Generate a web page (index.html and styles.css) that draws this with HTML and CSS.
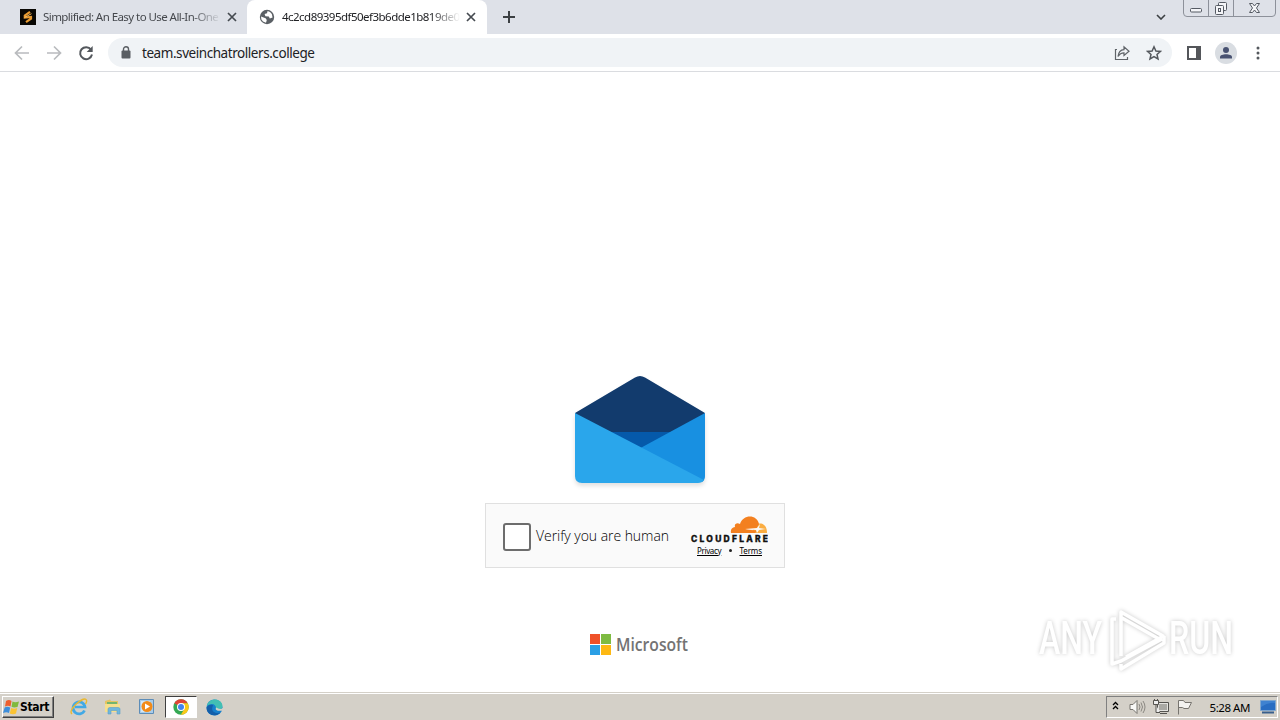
FILE: index.html
```html
<!DOCTYPE html>
<html lang="en">
<head>
  <meta charset="UTF-8">
  <title>team.sveinchatrollers.college</title>
  <link rel="stylesheet" href="styles.css">
</head>
<body>
  <div class="tabs">
    <div class="tab">
      <svg class="favicon" width="16" height="16" viewBox="0 0 16 16">
        <rect width="16" height="16" fill="#090804"/>
        <path d="M10 2.800L4.800 6.600V8.600L11 8V9.600L6 13.200" fill="none" stroke="#e99b32" stroke-width="2.200"/>
        <path d="M4.500 8.500L11.500 4.700" fill="none" stroke="#f5bd61" stroke-width="1"/>
      </svg>
      <span class="tab-title tab-title-first">Simplified: An Easy to Use All-In-One</span>
      <svg class="close" width="10" height="10" viewBox="0 0 10 10"><path d="M1 1L9 9M9 1L1 9" stroke="#454a50" stroke-width="1.700"/></svg>
    </div>
    <div class="tab active">
      <svg class="favicon" width="16" height="16" viewBox="0 0 16 16">
        <circle cx="8" cy="8" r="7.200" fill="#5b6065"/>
        <path d="M8.600 2L8 4.200L5.600 5L6.400 7.200L9.800 7.400L10.800 9.600L13.600 8.400L12.800 5L11 3ZM2 7.600L6.600 9.200L7.800 11L7 13.800L4 12.600L2.400 10.400Z" fill="#fff"/>
      </svg>
      <span class="tab-title tab-title-second">4c2cd89395df50ef3b6dde1b819de0</span>
      <svg class="close" width="10" height="10" viewBox="0 0 10 10"><path d="M1 1L9 9M9 1L1 9" stroke="#454a50" stroke-width="1.700"/></svg>
    </div>
    <svg class="new-tab" width="12" height="12" viewBox="0 0 12 12"><path d="M6 0V12M0 6H12" stroke="#3c4043" stroke-width="2"/></svg>
    <svg class="tab-search" width="10" height="6" viewBox="0 0 10 6"><path d="M1 1L5 5L9 1" fill="none" stroke="#3c4043" stroke-width="1.600"/></svg>
    <svg class="window-buttons" width="94" height="18" viewBox="0 0 94 18">
      <path d="M.5 0V13Q.5 16.500 4 16.500H89Q92.500 16.500 92.500 13V0M25.500 0V16M50.500 0V16" fill="none" stroke="#8d919a"/>
      <g fill="#f4f5f8" stroke="#555a63">
        <rect x="7.500" y="8.500" width="11" height="3.500" rx="1"/>
        <rect x="35.500" y="2.500" width="8" height="8" rx="1"/>
        <rect x="32.500" y="5.500" width="8" height="9" rx="1"/>
        <rect x="35.500" y="8.500" width="2" height="3"/>
        <path d="M66.500 3.500H69.500L71.500 6L73.500 3.500H76.500L73.500 8L76.500 12.500H73.500L71.500 10L69.500 12.500H66.500L69.500 8Z"/>
      </g>
    </svg>
  </div>

  <div class="toolbar">
    <svg class="nav-icon" width="16" height="16" viewBox="0 0 16 16"><path d="M15 8H2M8 1.500L1.500 8L8 14.500" fill="none" stroke="#b9bbbe" stroke-width="1.700"/></svg>
    <svg class="nav-icon" width="16" height="16" viewBox="0 0 16 16"><path d="M1 8H14M8 1.500L14.500 8L8 14.500" fill="none" stroke="#b9bbbe" stroke-width="1.700"/></svg>
    <svg class="nav-icon" width="16" height="16" viewBox="0 0 16 16"><path d="M13 4.600A6 6 0 1 0 14 9.500" fill="none" stroke="#54585d" stroke-width="2"/><path d="M14.700 1V7H8.700Z" fill="#54585d"/></svg>
    <div class="address">
      <svg width="10" height="13" viewBox="0 0 10 13"><rect x=".5" y="4.500" width="9" height="8" rx="1" fill="#5a5e63"/><path d="M2.500 5V3A2.500 2.200 0 0 1 7.500 3V5" fill="none" stroke="#5a5e63" stroke-width="1.400"/></svg>
      <span class="url">team.sveinchatrollers.college</span>
      <svg class="share" width="16" height="16" viewBox="0 0 16 16"><path d="M3 4.500H1.500V14.500H13.500V12M4 11.500C4.500 7 6.500 4.800 10 4.600V1.800L15 6.200L10 10.500V7.800C7.500 7.800 5.500 9 4 11.500Z" fill="none" stroke="#5f6368" stroke-width="1.200"/></svg>
      <svg class="star" width="16" height="16" viewBox="0 0 16 16"><path d="M8 1.800L9.900 6L14.400 6.400L11 9.400L12 13.900L8 11.500L4 13.900L5 9.400L1.600 6.400L6.100 6Z" fill="none" stroke="#54585d" stroke-width="1.500"/></svg>
    </div>
    <svg class="panel" width="14" height="14" viewBox="0 0 14 14"><path d="M1 1H13V13H1Z" fill="#fff" stroke="#54565a" stroke-width="2"/><path d="M9 0H14V14H9Z" fill="#54565a"/></svg>
    <svg class="profile" width="22" height="22" viewBox="0 0 22 22"><circle cx="11" cy="11" r="11" fill="#d9dde2"/><circle cx="11" cy="8" r="3" fill="#485271"/><path d="M5 16.500V15C5 11.300 17 11.300 17 15V16.500Z" fill="#485271"/></svg>
    <svg class="menu" width="4" height="14" viewBox="0 0 4 14" fill="#54585d"><circle cx="2" cy="2" r="1.500"/><circle cx="2" cy="7" r="1.500"/><circle cx="2" cy="12" r="1.500"/></svg>
  </div>

  <main class="page">
    <svg class="envelope" width="130" height="107" viewBox="0 0 130 107">
      <path d="M0 37L60 1.500Q65 -1.500 70 1.500L130 37L124 65H8Z" fill="#123b6d"/>
      <path d="M30 56H100L66 76Z" fill="#0559aa"/>
      <path d="M130 37V100Q130 104 127 106L60 75Z" fill="#1890e1"/>
      <path d="M0 37L129 104Q127 107 123 107H7Q0 107 0 100Z" fill="#2aa6eb"/>
    </svg>
    <div class="challenge">
      <span class="checkbox"></span>
      <span class="verify">Verify you are human</span>
      <div class="brand">
        <svg width="78" height="28" viewBox="0 0 78 28">
          <path d="M62 18C63 13 65 9 70 8.500C74 8.500 77 12 77 18Z" fill="#fbad41"/>
          <path d="M41 18Q40 13 45 12C44 9 47 7 50 9C53 -1 67 -1 69 9L66 14L55 14.500L67 15.500L65 18Z" fill="#f38020"/>
          <path d="M55 14L67 13L70 9L69 13L76 14L69 15L67 18L66 15Z" fill="#fafafa"/>
          <text class="cloudflare" x="1" y="27" textLength="77">CLOUDFLARE</text>
        </svg>
        <div class="links"><span class="link privacy">Privacy</span><span class="dot"></span><span class="link terms">Terms</span></div>
      </div>
    </div>
    <div class="microsoft">
      <svg width="21" height="21" viewBox="0 0 21 21"><path d="M0 0H10V10H0Z" fill="#ef5129"/><path d="M11 0H21V10H11Z" fill="#7ebb42"/><path d="M0 11H10V21H0Z" fill="#2b9fe5"/><path d="M11 11H21V21H11Z" fill="#fdb813"/></svg>
      <svg class="wordmark" width="73" height="21" viewBox="0 0 73 21"><text class="ms-name" x="0" y="17" textLength="72" lengthAdjust="spacingAndGlyphs">Microsoft</text></svg>
    </div>
    <svg class="watermark" width="206" height="70" viewBox="0 0 206 70">
      <text class="watermark-text" x="7" y="49" textLength="63" lengthAdjust="spacingAndGlyphs">ANY</text>
      <text class="watermark-text" x="137" y="49" textLength="64" lengthAdjust="spacingAndGlyphs">RUN</text>
      <g fill="none" stroke="#fff" stroke-width="3.500" stroke-linejoin="round">
        <path d="M89 51V7L131 31L127 34L90 13M94 52L128 33"/>
        <path d="M84 14H80V59L89 56L130 34M89 59V64L132 38V31"/>
      </g>
    </svg>
  </main>

  <div class="taskbar">
    <div class="start">
      <svg width="17" height="17" viewBox="0 0 17 17">
        <path d="M3 2Q6 0 8.500 2L7.500 7.500Q5 6 2 7.500Z" fill="#ed5f2f"/>
        <path d="M9.500 2.500Q12 4 16 2.500L14.500 8Q11 9 8.500 7.800Z" fill="#80b93e"/>
        <path d="M1.700 8.500Q4 7 7.200 8.600L6 14Q3.500 12.500 0 14Z" fill="#3d8edb"/>
        <path d="M8.200 9Q11 10.500 14.200 9L13 14.500Q10 16 6.800 14.500Z" fill="#fac333"/>
      </svg>
      <span>Start</span>
    </div>
    <svg class="app ie" width="18" height="18" viewBox="0 0 18 18">
      <path d="M14.500 12.500A6 6 0 1 1 15 9H5" fill="none" stroke="#42a9e5" stroke-width="2.700"/>
      <path d="M2 16C-3 12 13 -1 16 1.500Q17.500 3 15.500 6" fill="none" stroke="#e9b831" stroke-width="1.400"/>
    </svg>
    <svg class="app" width="18" height="18" viewBox="0 0 18 18">
      <path d="M1 3L6 1.500L7 3H14V14H1Z" fill="#e5c463"/>
      <path d="M3 4H13V8H3Z" fill="#74b56e"/><path d="M1 6H16V14H1Z" fill="#f6df8d"/>
      <path d="M4 16V11Q4 9.500 6 9.500H14Q16 9.500 16 11V16H13V12.500H7V16Z" fill="#71b7dc" stroke="#5b9fc8" stroke-width=".6"/>
    </svg>
    <svg class="app" width="18" height="18" viewBox="0 0 18 18">
      <path d="M1.500 1.500H15.500V15.500H1.500Z" fill="#a8cce9" stroke="#5d8db8"/>
      <path d="M3 3H12V14H3Z" fill="#d3e7f6"/>
      <circle cx="9" cy="8.500" r="5.500" fill="#f28b19"/><path d="M7 5.500L12 8.500L7 11.500Z" fill="#fff"/>
    </svg>
    <div class="running">
      <svg width="16" height="16" viewBox="0 0 16 16">
        <circle cx="8" cy="8" r="7.700" fill="#34a853"/>
        <path d="M8 8L1.300 4.200A7.700 7.700 0 0 1 14.700 4.200H8Z" fill="#df4435"/>
        <path d="M8 4.200H14.700A7.700 7.700 0 0 1 7.800 15.700L11.300 9.900Z" fill="#fbc817"/>
        <circle cx="8" cy="8" r="4" fill="#fff"/><circle cx="8" cy="8" r="3" fill="#4284ee"/>
      </svg>
    </div>
    <svg class="app edge" width="17" height="17" viewBox="0 0 17 17">
      <circle cx="8.500" cy="8.500" r="8" fill="#1680cd"/>
      <path d="M.8 7C3 -2 16 -1 16.500 7C16.500 11 12 12 9.500 10.500C11 8.500 9 5 6 5Q3 5 .8 7Z" fill="#42bfb4"/>
      <path d="M6.500 8C5 12 9 15 14.500 13.500C8 20 -1 14 .8 8Q3 5 7 6Z" fill="#145fa9"/>
      <path d="M10 8.500Q9 11 12 11.700H17V9Q14 11 10 8.500Z" fill="#d4d0c8"/>
    </svg>
    <div class="tray">
      <svg class="chevron" width="7" height="9" viewBox="0 0 7 9"><path d="M1 4L3.500 1.500L6 4M1 8L3.500 5.500L6 8" fill="none" stroke="#000" stroke-width="1.300"/></svg>
      <svg class="sound" width="17" height="16" viewBox="0 0 17 16"><path d="M1 5.500H4L8 1.500V14.500L4 10.500H1Z" fill="#f8f8f6" stroke="#77746f"/><path d="M10 5Q12 8 10 11M12 3.500Q15 8 12 12.500M14 2Q18 8 14 14" fill="none" stroke="#8b8882"/></svg>
      <svg class="network" width="16" height="16" viewBox="0 0 16 16"><path d="M4.500 3.500H15.500V12.500H4.500ZM7 14.500H14" fill="#e4e3df" stroke="#55534f"/><path d="M6 5H14V11H6Z" fill="#aaa9a4"/><path d="M.5 1.500V5.500H5.500V1.500ZM3 6V13.500H7M1.500 0V2M4.500 0V2" fill="#eee" stroke="#55534f"/></svg>
      <svg class="flag" width="17" height="16" viewBox="0 0 17 16"><path d="M2.500 15.500V1.500H7.500L9 3.500H15.500L12.500 9.500H8L6.500 8.500H3" fill="#f3f2ef" stroke="#77746f"/></svg>
      <span class="clock">5:28 AM</span>
      <svg class="desktop" width="16" height="14" viewBox="0 0 16 14"><path d="M.5.5H15.500V10.500H.5Z" fill="#296dc2" stroke="#7fa6cf"/><path d="M1 7Q8 2 15 3V1H1Z" fill="#3f82d0"/><path d="M2 12.500H14" stroke="#385f8c" stroke-width="2"/></svg>
    </div>
  </div>
</body>
</html>
```
FILE: styles.css
```css
* {
  box-sizing: border-box;
}

body {
  margin: 0;
  width: 1280px;
  height: 720px;
  overflow: hidden;
  display: flex;
  flex-direction: column;
  background: #fff;
  color: #202124;
  font-family: "Noto Sans", sans-serif;
}

svg {
  display: block;
  flex: none;
}

span {
  white-space: nowrap;
}

/* browser */
.tabs {
  height: 34px;
  flex: none;
  display: flex;
  background: #dee1e8;
}

.tab {
  width: 247px;
  height: 34px;
  padding: 0 10px 0 20px;
  display: flex;
  align-items: center;
}

.tab.active {
  width: 240px;
  padding: 0 11px 0 12px;
  background: #fff;
  border-radius: 8px 8px 0 0;
}

.tab-title {
  width: 178px;
  margin-left: 7px;
  font-size: 11.5px;
  line-height: 20px;
  -webkit-mask-image: linear-gradient(to right, #000 148px, transparent 178px);
  mask-image: linear-gradient(to right, #000 148px, transparent 178px);
}

.tab-title-first {
  letter-spacing: -0.56px;
  color: #45484d;
}

.tab-title-second {
  letter-spacing: -0.52px;
}

.close {
  margin-left: auto;
}

.new-tab {
  margin: 11px 0 0 16px;
}

.tab-search {
  margin: 14px 17px 0 auto;
}

.window-buttons {
  margin-right: 3px;
}

.toolbar {
  height: 38px;
  flex: none;
  padding-left: 14px;
  display: flex;
  align-items: center;
  border-bottom: 1px solid #dadce0;
}

.nav-icon {
  margin-right: 16px;
}

.address {
  width: 1064px;
  height: 29px;
  margin-left: -2px;
  padding: 0 10px 0 13px;
  display: flex;
  align-items: center;
  border-radius: 15px;
  background: #f0f3f6;
}

.url {
  margin-left: 11px;
  font-size: 13.5px;
  letter-spacing: -0.44px;
}

.share {
  margin-left: auto;
}

.star {
  margin-left: 16px;
}

.panel {
  margin-left: 15px;
}

.profile {
  margin-left: 14px;
}

.menu {
  margin-left: 19px;
}

/* verification page */
.page {
  position: relative;
  height: 620px;
  flex: none;
  display: flex;
  flex-direction: column;
  align-items: center;
  padding-top: 304px;
}

.envelope {
  filter: drop-shadow(0 3px 2px rgba(0, 0, 0, 0.12));
}

.challenge {
  width: 300px;
  height: 65px;
  margin: 20px 10px 0 0;
  padding: 0 16px 0 17px;
  display: flex;
  align-items: center;
  border: 1px solid #e0e0e0;
  background: #fafafa;
}

.checkbox {
  width: 28px;
  height: 28px;
  margin-top: 2px;
  border: 2px solid #6d6d6d;
  border-radius: 3px;
  background: #fff;
}

.verify {
  margin-left: 5px;
  color: #000;
  font-family: "Open Sans", sans-serif;
  font-size: 14px;
  font-weight: 300;
  letter-spacing: -0.05px;
}

.brand {
  width: 78px;
  margin-left: auto;
}

.cloudflare {
  font: 800 8.5px Inter, sans-serif;
  fill: #111;
  stroke: #111;
  stroke-width: 0.3px;
}

.links {
  height: 12px;
  margin-top: 1px;
  padding: 0 6px 0 7px;
  display: flex;
  align-items: center;
  justify-content: space-between;
  color: #000;
  font-size: 8px;
  line-height: 9px;
}

.link {
  text-decoration: underline;
}

.privacy {
  letter-spacing: -0.35px;
}

.terms {
  letter-spacing: -0.1px;
}

.dot {
  width: 3px;
  height: 3px;
  border-radius: 50%;
  background: #222;
}

.microsoft {
  margin: 66px 1px 0 0;
  display: flex;
  gap: 5px;
}

.wordmark {
  overflow: visible;
}

.ms-name {
  font: 600 17.5px "Open Sans", sans-serif;
  fill: #737373;
}

.watermark {
  position: absolute;
  right: 42px;
  bottom: 17px;
  filter: drop-shadow(0 0 2px rgba(0, 0, 0, 0.22));
}

.watermark-text {
  font: 500 47px Roboto, sans-serif;
  fill: #fff;
}

/* taskbar */
.taskbar {
  height: 28px;
  flex: none;
  padding: 1px 2px 0 2px;
  display: flex;
  align-items: center;
  border-top: 1px solid #d4d0c8;
  box-shadow: inset 0 1px #fff;
  background: #d4d0c8;
}

.start {
  width: 52px;
  height: 22px;
  display: flex;
  align-items: center;
  border: 1px solid;
  border-color: #fff #404040 #404040 #fff;
  box-shadow: inset -1px -1px #808080;
  color: #000;
  font: bold 12px "DejaVu Sans Condensed", "DejaVu Sans", sans-serif;
}

.start span {
  letter-spacing: -0.35px;
}

.app {
  margin-left: 16px;
}

.running {
  width: 32px;
  height: 22px;
  margin-left: 9px;
  display: flex;
  align-items: center;
  justify-content: center;
  border: 1px solid;
  border-color: #404040 #fff #fff #404040;
  background: #fff;
}

.edge {
  margin-left: 9px;
}

.tray {
  width: 172px;
  height: 22px;
  margin-left: auto;
  padding: 0 1px 0 5px;
  display: flex;
  align-items: center;
  border: 1px solid;
  border-color: #808080 #fff #fff #808080;
}

.chevron {
  margin-bottom: 3px;
}

.sound {
  margin-left: 10px;
}

.network {
  margin-left: 7px;
}

.flag {
  margin-left: 7px;
}

.clock {
  margin-left: auto;
  color: #000;
  font-size: 11.5px;
  letter-spacing: -0.45px;
}

.desktop {
  margin-left: 10px;
}
```
